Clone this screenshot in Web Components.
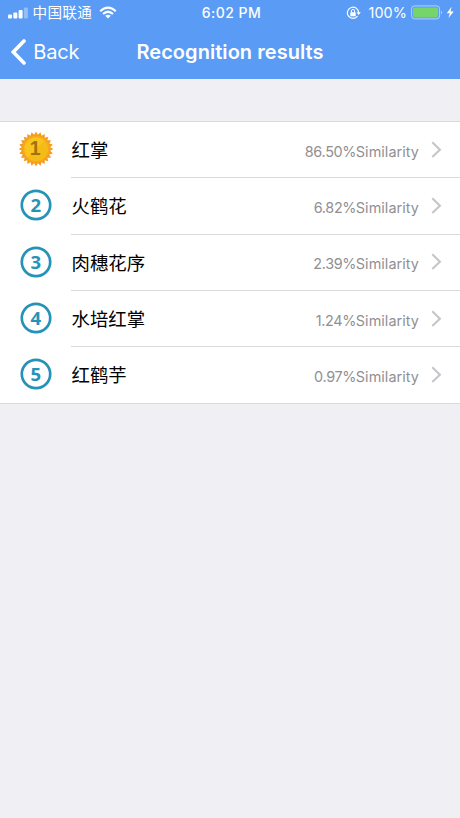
<!DOCTYPE html>
<html lang="en">
<head>
<meta charset="utf-8">
<title>Recognition results</title>
<style>
body { margin: 0; background: #efeff4; font-family: Inter, "Noto Sans CJK SC", sans-serif; }
</style>
</head>
<body>
<phone-screen>
  <status-bar></status-bar>
  <nav-bar back="Back">Recognition results</nav-bar>
  <result-list>
    <result-row rank="1" score="86.50%">红掌</result-row>
    <result-row rank="2" score="6.82%">火鹤花</result-row>
    <result-row rank="3" score="2.39%">肉穗花序</result-row>
    <result-row rank="4" score="1.24%">水培红掌</result-row>
    <result-row rank="5" score="0.97%">红鹤芋</result-row>
  </result-list>
</phone-screen>
<script>
class BaseElement extends HTMLElement {
  connectedCallback() {
    if (!this.shadowRoot) this.attachShadow({ mode: "open" }).innerHTML = this.render();
  }
}

customElements.define("phone-screen", class extends BaseElement {
  render() {
    return `<style>:host{display:flex;flex-direction:column;width:460px;height:818px;overflow:hidden;background:#efeff4}</style><slot></slot>`;
  }
});

customElements.define("status-bar", class extends BaseElement {
  render() {
    return `<style>
      :host{display:grid;grid-template-columns:1fr auto 1fr;height:25px;padding:0 5px 0 8px;box-sizing:border-box;align-items:center;background:#599bf5;color:#fff;font-size:14px;line-height:25px}
      .left,.right{display:flex;align-items:center}
      .right{justify-content:flex-end}
      svg{display:block;flex:none}
      .carrier{font-size:14.6px;margin:0 7px 0 4.5px;letter-spacing:.3px;padding-top:2px;line-height:23px}
      .time{font-weight:500;font-size:14px;letter-spacing:.5px}
      .pct{font-size:14.4px;letter-spacing:.1px;margin:0 4px 0 7px}
    </style>
    <div class="left">
      <svg width="20" height="12" fill="#fff"><rect x="0" y="7.5" width="4" height="4" rx="1"/><rect x="5.3" y="5.5" width="4" height="6" rx="1"/><rect x="10.6" y="3" width="4" height="8.5" rx="1"/><rect x="15.9" y="0.5" width="4" height="11" rx="1" opacity=".35"/></svg>
      <span class="carrier">中国联通</span>
      <svg width="18" height="13" viewBox="0 0 18 13" fill="none" stroke="#fff" stroke-width="2.2"><path d="M1.2 5.2Q9-2 16.8 5.2M4 8Q9 3.5 14 8"/><path d="M6.2 9.7Q9 7.6 11.8 9.7L9 12.6Z" fill="#fff" stroke="none"/></svg>
    </div>
    <span class="time">6:02 PM</span>
    <div class="right">
      <svg width="15" height="14" viewBox="0 0 15 14"><path d="M11.6 10A5.6 5.6 0 1 1 12.6 6.8" fill="none" stroke="#fff" stroke-width="1.2"/><path d="M10.5 6.3H14.8L12.6 9Z" fill="#fff"/><rect x="4.3" y="6.2" width="5.4" height="4" rx=".5" fill="#fff"/><path d="M5.4 6.5V5a1.6 1.6 0 0 1 3.2 0V6.5" fill="none" stroke="#fff"/></svg>
      <span class="pct">100%</span>
      <svg width="44" height="15" viewBox="0 0 44 15"><rect x=".6" y=".9" width="28" height="13" rx="3" fill="none" stroke="#b5d2fb"/><rect x="2.1" y="2.4" width="25" height="10" rx="1.6" fill="#75d56a"/><path d="M30 5.4q2 2 0 4z" fill="#b5d2fb"/><path d="M40.6 1.8L35.8 8.2H38.9L37.4 13L42.8 6.4H39.6Z" fill="#fff"/></svg>
    </div>`;
  }
});

customElements.define("nav-bar", class extends BaseElement {
  render() {
    return `<style>
      :host{display:grid;grid-template-columns:1fr auto 1fr;align-items:center;height:54px;box-sizing:border-box;padding:0 11px;background:#599bf5;color:#fff}
      .back{display:flex;align-items:center;font-size:20px;letter-spacing:-.2px;line-height:28px}
      svg{display:block;margin-right:7.3px}
      h1{margin:0 -.5px;font-size:20px;line-height:28px;font-weight:600;letter-spacing:.05px}
    </style>
    <div class="back"><svg width="15" height="26" viewBox="0 0 15 26"><path d="M13 2L2.3 13L13 24" fill="none" stroke="#fff" stroke-width="3.6" stroke-linecap="round" stroke-linejoin="miter"/></svg><span>${this.getAttribute("back")}</span></div>
    <h1><slot></slot></h1>`;
  }
});

customElements.define("result-list", class extends BaseElement {
  render() {
    return `<style>:host{display:block;margin-top:42px;background:#fff;border-top:1px solid #d9d9dd;border-bottom:1px solid #d9d9dd}</style><slot></slot>`;
  }
});

customElements.define("rank-badge", class extends BaseElement {
  render() {
    const n = this.getAttribute("rank");
    let art;
    if (n === "1") {
      const teeth = 24, pts = [];
      for (let i = 0; i < teeth * 2; i++) {
        const r = i % 2 ? 14.3 : 17.4, a = Math.PI * i / teeth - Math.PI / 2;
        pts.push((18 + r * Math.cos(a)).toFixed(2) + "," + (18 + r * Math.sin(a)).toFixed(2));
      }
      art = `<polygon points="${pts.join(" ")}" fill="#f39c1f"/><circle cx="18" cy="18" r="13.6" fill="#f6a81f"/><circle cx="18" cy="18" r="11.7" fill="#fac51c"/><path d="M9.7 26.3A11.7 11.7 0 0 0 26.3 9.7Z" fill="#f5bb16"/><text x="17.2" y="24.2" fill="#a0730f" font-family="Liberation Sans" font-size="19.5" font-weight="700">1</text>`;
    } else {
      art = `<circle cx="18" cy="18" r="14.2" fill="#fff" stroke="#2593b8" stroke-width="2.7"/><text x="17.8" y="24.7" fill="#2593b8" font-family="Noto Sans" font-size="18.6" font-weight="700">${n}</text>`;
    }
    return `<style>:host{display:block;width:36px;height:36px}svg{display:block;overflow:visible}</style><svg width="36" height="36" text-anchor="middle">${art}</svg>`;
  }
});

customElements.define("result-row", class extends BaseElement {
  render() {
    return `<style>
      :host{display:flex;align-items:center;height:56.3px;padding-left:17.7px;box-sizing:border-box;background:#fff}
      .body{display:flex;align-items:center;flex:1;height:100%;margin-left:17.8px;padding-right:18px;box-sizing:border-box;border-bottom:1px solid #d9d9dd}
      :host(:last-child) .body{border-bottom-color:transparent}
      rank-badge{margin-top:-2px}
      .name{flex:1;font-size:18.4px;line-height:28px;color:#000;padding-top:1px}
      .score{font-size:14.4px;line-height:20px;color:#909093;white-space:nowrap;padding-top:4px;display:flex}
      .pct{letter-spacing:-.3px;margin-right:-.4px}
      .word{letter-spacing:.06px}
      svg{display:block;margin-left:12px}
    </style>
    <rank-badge rank="${this.getAttribute("rank")}"></rank-badge>
    <div class="body">
      <span class="name"><slot></slot></span>
      <span class="score"><span class="pct">${this.getAttribute("score")}</span><span class="word">Similarity</span></span>
      <svg width="11" height="18" viewBox="0 0 11 18"><path d="M1.3 1.3L8.9 8.7L1.3 16.1" fill="none" stroke="#c5c5ca" stroke-width="2.1"/></svg>
    </div>`;
  }
});
</script>
</body>
</html>
